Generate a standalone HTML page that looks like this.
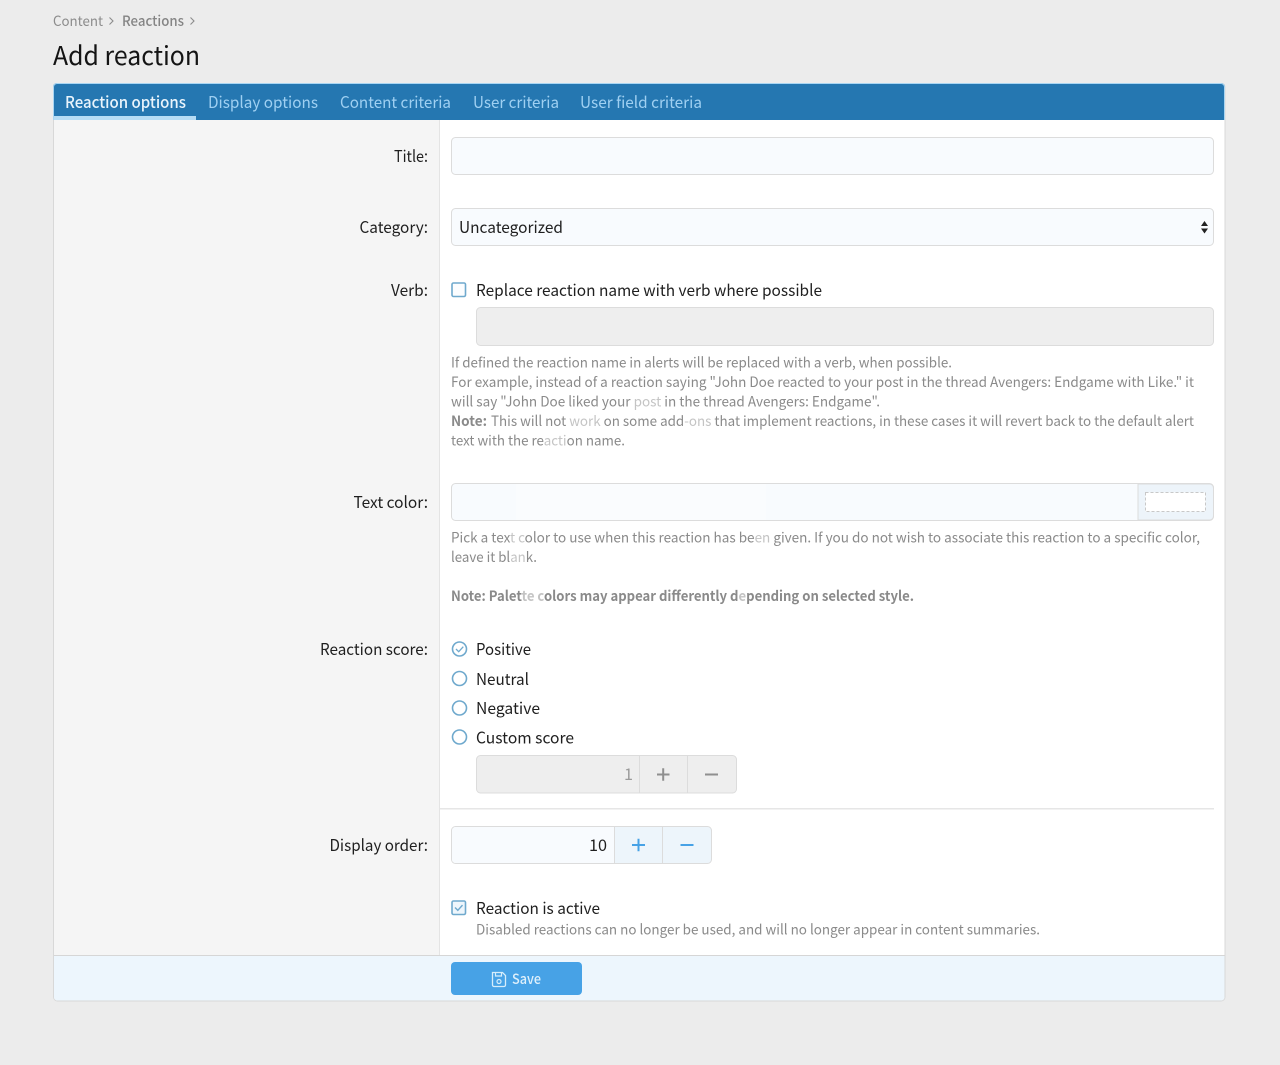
<!DOCTYPE html>
<html lang="en">
<head>
<meta charset="utf-8">
<title>Add reaction</title>
<style>
html,body{margin:0;padding:0;background:#ececec;width:1280px;height:1065px;overflow:hidden}
svg{display:block;position:absolute;left:0;top:0;filter:blur(.3px)}
text{font-family:"Noto Sans CJK JP","Liberation Sans",sans-serif;font-size:16px;fill:#1f1f1f}
.h{font-size:14px;fill:#8a8a8a}
.b{font-weight:700}
.m{font-weight:500}
.l{fill:#c4c4c4}
.t{fill:#9fd0f2}
.in{fill:#f8fbfe;stroke:#dcdcdc}
.dis{fill:#eeeeee;stroke:#dcdcdc}
.c{fill:none;stroke:#6fa9cd;stroke-width:1.6}
</style>
</head>
<body>
<svg width="1280" height="1065" viewBox="0 0 1280 1065" xmlns="http://www.w3.org/2000/svg">
<rect width="1280" height="1065" fill="#ececec"/>

<text x="53" y="26" style="font-size:14px;fill:#8c8c8c" textLength="50" lengthAdjust="spacingAndGlyphs">Content</text>
<path d="M109.500 17.500l3.500 3.500-3.500 3.500" fill="none" stroke="#8c8c8c" stroke-width="1.100"/>
<text x="122" y="26" class="m" style="font-size:14px;fill:#858585" textLength="62" lengthAdjust="spacingAndGlyphs">Reactions</text>
<path d="M190.500 17.500l3.500 3.500-3.500 3.500" fill="none" stroke="#8c8c8c" stroke-width="1.100"/>
<text x="53" y="65" style="font-size:26px;fill:#141414" textLength="147" lengthAdjust="spacingAndGlyphs">Add reaction</text>

<!-- panel -->
<rect x="53.500" y="83.500" width="1171.500" height="917.500" rx="4" fill="#ffffff" stroke="#d8d8d8"/>
<rect x="54" y="120" width="385" height="836" fill="#f5f5f5"/>
<rect x="439" y="120" width="1" height="836" fill="#e4e4e4"/>

<!-- tabs -->
<path d="M53 120V87a4 4 0 0 1 4-4H1221a4 4 0 0 1 4 4V120Z" fill="#2577b1"/>
<path d="M53.500 120V87a3.500 3.500 0 0 1 3.500-3.500H1221a3.500 3.500 0 0 1 3.500 3.500V120" fill="none" stroke="#a9d6f3"/>
<rect x="54" y="116" width="142" height="4" fill="#b5dcf5"/>
<text x="65" y="108" class="m" style="fill:#e9f4fc" textLength="121" lengthAdjust="spacingAndGlyphs">Reaction options</text>
<text x="208" y="108" class="t" textLength="110" lengthAdjust="spacingAndGlyphs">Display options</text>
<text x="340" y="108" class="t" textLength="111" lengthAdjust="spacingAndGlyphs">Content criteria</text>
<text x="473" y="108" class="t" textLength="86" lengthAdjust="spacingAndGlyphs">User criteria</text>
<text x="580" y="108" class="t" textLength="122" lengthAdjust="spacingAndGlyphs">User field criteria</text>

<!-- labels -->
<text x="394" y="162" textLength="34" lengthAdjust="spacingAndGlyphs">Title:</text>
<text x="359.500" y="233" textLength="68.500" lengthAdjust="spacingAndGlyphs">Category:</text>
<text x="391" y="296" textLength="37" lengthAdjust="spacingAndGlyphs">Verb:</text>
<text x="353.500" y="508" textLength="74.500" lengthAdjust="spacingAndGlyphs">Text color:</text>
<text x="320" y="655" textLength="108" lengthAdjust="spacingAndGlyphs">Reaction score:</text>
<text x="329.500" y="851" textLength="98.500" lengthAdjust="spacingAndGlyphs">Display order:</text>

<!-- title / category -->
<rect x="451.500" y="137.500" width="762" height="37" rx="4" class="in"/>
<rect x="451.500" y="208.500" width="762" height="37" rx="4" class="in"/>
<text x="459" y="233" textLength="104" lengthAdjust="spacingAndGlyphs">Uncategorized</text>
<path d="M1201 226l3.500-5 3.500 5zM1201 228.500l3.500 5 3.500-5z" fill="#222"/>

<!-- verb -->
<rect x="452" y="283" width="13.500" height="13.500" rx="1.500" class="c" style="fill:#fbfdff"/>
<text x="476" y="296" textLength="346" lengthAdjust="spacingAndGlyphs">Replace reaction name with verb where possible</text>
<rect x="476.500" y="307.500" width="737" height="38" rx="4" class="dis"/>
<text x="451" y="367.500" class="h" textLength="501" lengthAdjust="spacingAndGlyphs">If defined the reaction name in alerts will be replaced with a verb, when possible.</text>
<text x="451" y="387" class="h" textLength="743" lengthAdjust="spacingAndGlyphs">For example, instead of a reaction saying "John Doe reacted to your post in the thread Avengers: Endgame with Like." it</text>
<text x="451" y="406.500" class="h" textLength="429" lengthAdjust="spacingAndGlyphs">will say "John Doe liked your <tspan class="l">post</tspan> in the thread Avengers: Endgame".</text>
<text x="451" y="426" class="h b" textLength="36" lengthAdjust="spacingAndGlyphs">Note:</text>
<text x="491" y="426" class="h" textLength="703" lengthAdjust="spacingAndGlyphs">This will not <tspan class="l">work</tspan> on some add<tspan class="l">-ons</tspan> that implement reactions, in these cases it will revert back to the default alert</text>
<text x="451" y="445.500" class="h" textLength="174" lengthAdjust="spacingAndGlyphs">text with the re<tspan class="l">acti</tspan>on name.</text>

<!-- text color -->
<rect x="451.500" y="483.500" width="762" height="37" rx="4" class="in"/>
<path d="M1138 484H1209.500a4 4 0 0 1 4 4V516a4 4 0 0 1-4 4H1138Z" fill="#edf4fa" stroke="#dcdcdc"/>
<rect x="1145.500" y="492.500" width="60" height="19" fill="#ffffff" stroke="#c8c8c8" stroke-dasharray="3 2"/>
<path d="M516 484h250v36H516Z" fill="#ffffff" opacity=".3"/>
<text x="451" y="542.500" class="h" textLength="749" lengthAdjust="spacingAndGlyphs">Pick a tex<tspan class="l">t c</tspan>olor to use when this reaction has be<tspan class="l">en</tspan> given. If you do not wish to associate this reaction to a specific color,</text>
<text x="451" y="562" class="h" textLength="86" lengthAdjust="spacingAndGlyphs">leave it bl<tspan class="l">an</tspan>k.</text>
<text x="451" y="601" class="h b" textLength="463" lengthAdjust="spacingAndGlyphs">Note: Palet<tspan class="l">te c</tspan>olors may appear differently d<tspan class="l">e</tspan>pending on selected style.</text>

<!-- radios -->
<circle cx="459.500" cy="649" r="7" class="c"/>
<path d="M456 649l2.700 2.700 4.600-5" fill="none" stroke="#6fa9cd" stroke-width="1.300"/>
<text x="476" y="655" textLength="55" lengthAdjust="spacingAndGlyphs">Positive</text>
<circle cx="459.500" cy="678.500" r="7" class="c"/>
<text x="476" y="685" textLength="53" lengthAdjust="spacingAndGlyphs">Neutral</text>
<circle cx="459.500" cy="708" r="7" class="c"/>
<text x="476" y="714" textLength="64" lengthAdjust="spacingAndGlyphs">Negative</text>
<circle cx="459.500" cy="737" r="7" class="c"/>
<text x="476" y="743.500" textLength="98" lengthAdjust="spacingAndGlyphs">Custom score</text>

<!-- spin disabled -->
<rect x="476.500" y="755.500" width="260" height="37.500" rx="4" class="dis"/>
<rect x="639" y="756" width="1" height="37" fill="#dcdcdc"/>
<rect x="687" y="756" width="1" height="37" fill="#dcdcdc"/>
<text x="624" y="780" style="fill:#9a9a9a" textLength="9" lengthAdjust="spacingAndGlyphs">1</text>
<path d="M657 774.500h12.500M663.200 768.200v12.500" stroke="#8f8f8f" stroke-width="2" fill="none"/>
<path d="M705 774.500h13" stroke="#8f8f8f" stroke-width="2" fill="none"/>

<rect x="440" y="808" width="774" height="1.500" fill="#e6e6e6"/>

<!-- display order -->
<path d="M614.500 826.500H707.500a4 4 0 0 1 4 4V859.500a4 4 0 0 1-4 4H614.500Z" fill="#edf5fb"/>
<rect x="451.500" y="826.500" width="260" height="37" rx="4" fill="none" stroke="#dcdcdc"/>
<path d="M614 827H456a4 4 0 0 0-4 4V859a4 4 0 0 0 4 4H614Z" fill="#f8fbfe"/>
<rect x="614" y="827" width="1" height="37" fill="#dcdcdc"/>
<rect x="662" y="827" width="1" height="37" fill="#dcdcdc"/>
<text x="589" y="851" textLength="18" lengthAdjust="spacingAndGlyphs">10</text>
<path d="M632 845h13M638.500 838.700v12.600" stroke="#47a2e6" stroke-width="2" fill="none"/>
<path d="M680.500 845h13" stroke="#47a2e6" stroke-width="2" fill="none"/>

<!-- active -->
<rect x="452" y="901" width="13.500" height="13.500" rx="1.500" class="c" style="fill:#eef6fc"/>
<path d="M455 907.500l2.800 2.800 4.700-5.200" fill="none" stroke="#6fa9cd" stroke-width="1.400"/>
<text x="476" y="914" textLength="124" lengthAdjust="spacingAndGlyphs">Reaction is active</text>
<text x="476" y="934.500" class="h" textLength="564" lengthAdjust="spacingAndGlyphs">Disabled reactions can no longer be used, and will no longer appear in content summaries.</text>

<!-- footer -->
<path d="M54 956H1224.500V997a3.500 3.500 0 0 1-3.500 3.500H57.500a3.500 3.500 0 0 1-3.500-3.500Z" fill="#edf6fd"/>
<rect x="54" y="955" width="1171" height="1" fill="#d6d6d6"/>
<rect x="451" y="962" width="131" height="33" rx="4" fill="#47a2e6"/>
<path d="M492.500 972.500H502.500L505.500 975.500V985a1.500 1.500 0 0 1-1.500 1.500H494a1.500 1.500 0 0 1-1.500-1.500Z" fill="none" stroke="#d6edfb" stroke-width="1.300"/>
<path d="M495.500 972.500v3.500h6v-3.500" fill="none" stroke="#d6edfb" stroke-width="1.200"/>
<circle cx="499" cy="981.500" r="2" fill="none" stroke="#d6edfb" stroke-width="1.200"/>
<text x="512" y="984" class="m" style="font-size:14px;fill:#dff0fb" textLength="29" lengthAdjust="spacingAndGlyphs">Save</text>
</svg>
</body>
</html>
